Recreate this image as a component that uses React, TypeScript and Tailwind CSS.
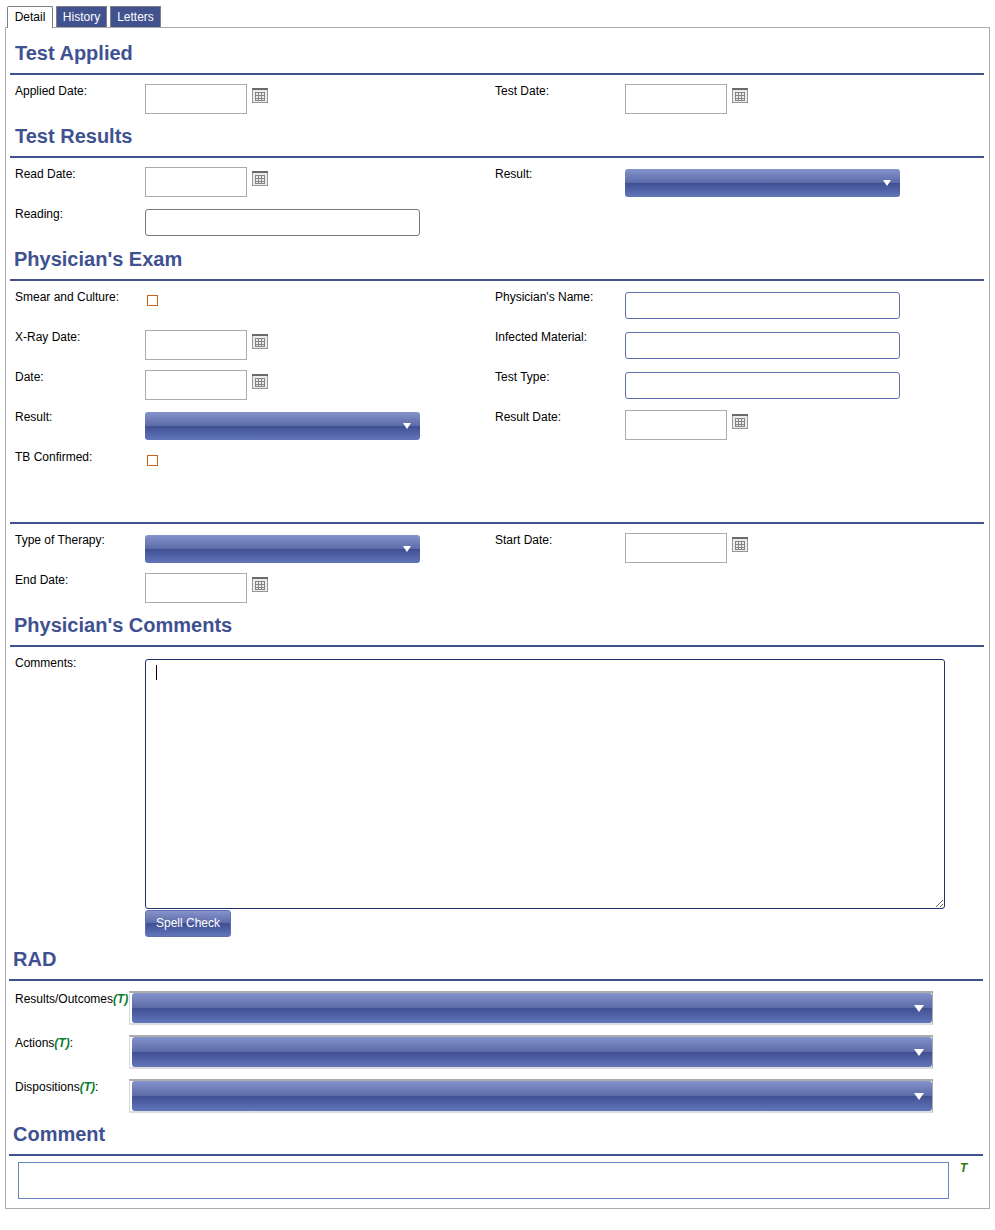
import type { ReactNode } from 'react';

const FONT = "font-['Liberation_Sans',Arial,sans-serif]";
const GLOSS =
  'bg-[linear-gradient(to_bottom,#8493cb_0%,#5d6ca8_49%,#3f4f92_50%,#6276ba_100%)]';

function CalendarIcon() {
  return (
    <svg width="16" height="15" viewBox="0 0 16 15" className="mt-[4px] ml-[5px] shrink-0">
      <rect x="0.5" y="0.5" width="15" height="14" fill="#ececec" stroke="#969696" />
      <rect x="0" y="0" width="16" height="2" fill="#6a6a6a" />
      <path
        d="M3 4.5h10M3 7.5h10M3 10.5h10M3 12.5h10M3.5 4v9M6.5 4v9M9.5 4v9M12.5 4v9"
        stroke="#858585"
        strokeWidth="1"
        fill="none"
      />
    </svg>
  );
}

function DateInput({ offset }: { offset: string }) {
  return (
    <div className={`flex items-start ${offset}`}>
      <input className="h-[30px] w-[102px] border border-[#ababab] bg-white" />
      <CalendarIcon />
    </div>
  );
}

function TextInput({ offset, gray }: { offset: string; gray?: boolean }) {
  return (
    <input
      className={`h-[27px] w-[275px] rounded-[3px] border bg-white ${offset} ${
        gray ? 'border-[#7a7a7a]' : 'border-[#5f70ad]'
      }`}
    />
  );
}

function Arrow() {
  return (
    <span className="h-0 w-0 border-x-[4px] border-t-[6px] border-x-transparent border-t-white" />
  );
}

function SelectBar({ offset }: { offset: string }) {
  return (
    <div
      className={`flex h-[28px] w-[275px] items-center justify-end rounded-[3px] pr-[9px] ${GLOSS} ${offset}`}
    >
      <Arrow />
    </div>
  );
}

function CheckBox() {
  return (
    <span className="mt-[7px] ml-[2px] block h-[11px] w-[11px] border border-[#c8651e] bg-white" />
  );
}

function Field({ label, children }: { label: string; children?: ReactNode }) {
  return (
    <div className="flex h-[40px] items-start">
      <label className="w-[130px] shrink-0 pt-[2px] text-[12px] leading-[14px] text-black">
        {label}
      </label>
      {children}
    </div>
  );
}

function Heading({ title, className, inset }: { title: string; className: string; inset: string }) {
  return (
    <div className={className}>
      <h2
        className={`border-b-2 border-[#42528f] pb-2 text-[20px] leading-[24px] font-bold text-[#3f5190] ${inset}`}
      >
        {title}
      </h2>
    </div>
  );
}

function FieldGrid({ className, children }: { className: string; children: ReactNode }) {
  return <div className={`ml-[9px] grid grid-cols-[480px_480px] ${className}`}>{children}</div>;
}

function RadRow({ label }: { label: ReactNode }) {
  return (
    <div className="ml-[9px] flex h-[44px] items-start">
      <label className="w-[114px] shrink-0 pt-[1px] text-[12px] leading-[14px] whitespace-nowrap text-black">
        {label}
      </label>
      <div className="h-[34px] w-[804px] border-t-2 border-r border-b-2 border-l border-t-[#ababab] border-r-[#ababab] border-b-[#dddddd] border-l-[#d5d5e0] pl-[2px]">
        <div className={`flex h-full items-center justify-end rounded-[3px] pr-[8px] ${GLOSS}`}>
          <span className="h-0 w-0 border-x-[5px] border-t-[7px] border-x-transparent border-t-white" />
        </div>
      </div>
    </div>
  );
}

function TMark() {
  return <em className="font-bold text-[#0b7d2e]">(T)</em>;
}

export default function App() {
  return (
    <div className={`min-h-[1230px] bg-white pt-[6px] pl-[5px] ${FONT}`}>
      <div className="relative z-10 ml-[2px] flex h-[21px] items-stretch gap-[3px] text-[12px] leading-[20px]">
        <div className="h-[22px] w-[46px] rounded-t-[2px] border border-b-0 border-[#7f7f88] bg-white text-center text-black">
          Detail
        </div>
        <div className="w-[51px] border border-b-0 border-[#7f7f88] bg-[#42528f] text-center text-white">
          History
        </div>
        <div className="w-[51px] border border-b-0 border-[#7f7f88] bg-[#42528f] text-center text-white">
          Letters
        </div>
      </div>

      <div className="h-[1182px] w-[985px] border border-[#ababab] bg-white">
        <Heading title="Test Applied" className="mt-[13px] mr-[5px] ml-[4px]" inset="pl-[5px]" />
        <FieldGrid className="pt-[7px]">
          <Field label="Applied Date:">
            <DateInput offset="mt-[2px]" />
          </Field>
          <Field label="Test Date:">
            <DateInput offset="mt-[2px]" />
          </Field>
        </FieldGrid>

        <Heading title="Test Results" className="mt-[2px] mr-[5px] ml-[4px]" inset="pl-[5px]" />
        <FieldGrid className="pt-[7px]">
          <Field label="Read Date:">
            <DateInput offset="mt-[2px]" />
          </Field>
          <Field label="Result:">
            <SelectBar offset="mt-[4px]" />
          </Field>
          <Field label="Reading:">
            <TextInput offset="mt-[4px]" gray />
          </Field>
          <div />
        </FieldGrid>

        <Heading title="Physician's Exam" className="mt-[2px] mr-[5px] ml-[4px]" inset="pl-[4px]" />
        <FieldGrid className="pt-[7px]">
          <Field label="Smear and Culture:">
            <CheckBox />
          </Field>
          <Field label="Physician's Name:">
            <TextInput offset="mt-[4px]" />
          </Field>
          <Field label="X-Ray Date:">
            <DateInput offset="mt-[2px]" />
          </Field>
          <Field label="Infected Material:">
            <TextInput offset="mt-[4px]" />
          </Field>
          <Field label="Date:">
            <DateInput offset="mt-[2px]" />
          </Field>
          <Field label="Test Type:">
            <TextInput offset="mt-[4px]" />
          </Field>
          <Field label="Result:">
            <SelectBar offset="mt-[4px]" />
          </Field>
          <Field label="Result Date:">
            <DateInput offset="mt-[2px]" />
          </Field>
          <Field label="TB Confirmed:">
            <CheckBox />
          </Field>
          <div />
        </FieldGrid>

        <div className="mt-[34px] mr-[5px] ml-[4px] border-b-2 border-[#42528f]" />
        <FieldGrid className="pt-[7px]">
          <Field label="Type of Therapy:">
            <SelectBar offset="mt-[4px]" />
          </Field>
          <Field label="Start Date:">
            <DateInput offset="mt-[2px]" />
          </Field>
          <Field label="End Date:">
            <DateInput offset="mt-[2px]" />
          </Field>
          <div />
        </FieldGrid>

        <Heading title="Physician's Comments" className="mt-[2px] mr-[5px] ml-[4px]" inset="pl-[4px]" />
        <div className="ml-[9px] flex items-start pt-[12px]">
          <label className="mt-[-3px] w-[130px] shrink-0 text-[12px] leading-[14px] text-black">
            Comments:
          </label>
          <div>
            <div className="relative h-[250px] w-[800px]">
              <textarea className="block h-full w-full resize rounded-[3px] border border-[#22306e] bg-white" />
              <span className="absolute top-[6px] left-[11px] h-[15px] w-px bg-black" />
            </div>
            <button
              className={`mt-px block h-[27px] w-[86px] rounded-[3px] border border-[#5f70ad] pb-[2px] text-[12px] text-white ${GLOSS}`}
            >
              Spell Check
            </button>
          </div>
        </div>

        <Heading title="RAD" className="mt-[10px] mr-[6px] ml-[3px]" inset="pl-[4px]" />
        <div className="pt-[10px]">
          <RadRow
            label={
              <>
                Results/Outcomes
                <TMark />
              </>
            }
          />
          <RadRow
            label={
              <>
                Actions
                <TMark />:
              </>
            }
          />
          <RadRow
            label={
              <>
                Dispositions
                <TMark />:
              </>
            }
          />
        </div>

        <Heading title="Comment" className="mt-[-1px] mr-[6px] ml-[3px]" inset="pl-[4px]" />
        <div className="ml-[12px] flex items-start pt-[6px]">
          <div className="h-[37px] w-[931px] border border-[#6584c0] bg-white" />
          <em className="ml-[11px] text-[12px] leading-[12px] font-bold text-[#2f7a12]">T</em>
        </div>
      </div>
    </div>
  );
}
